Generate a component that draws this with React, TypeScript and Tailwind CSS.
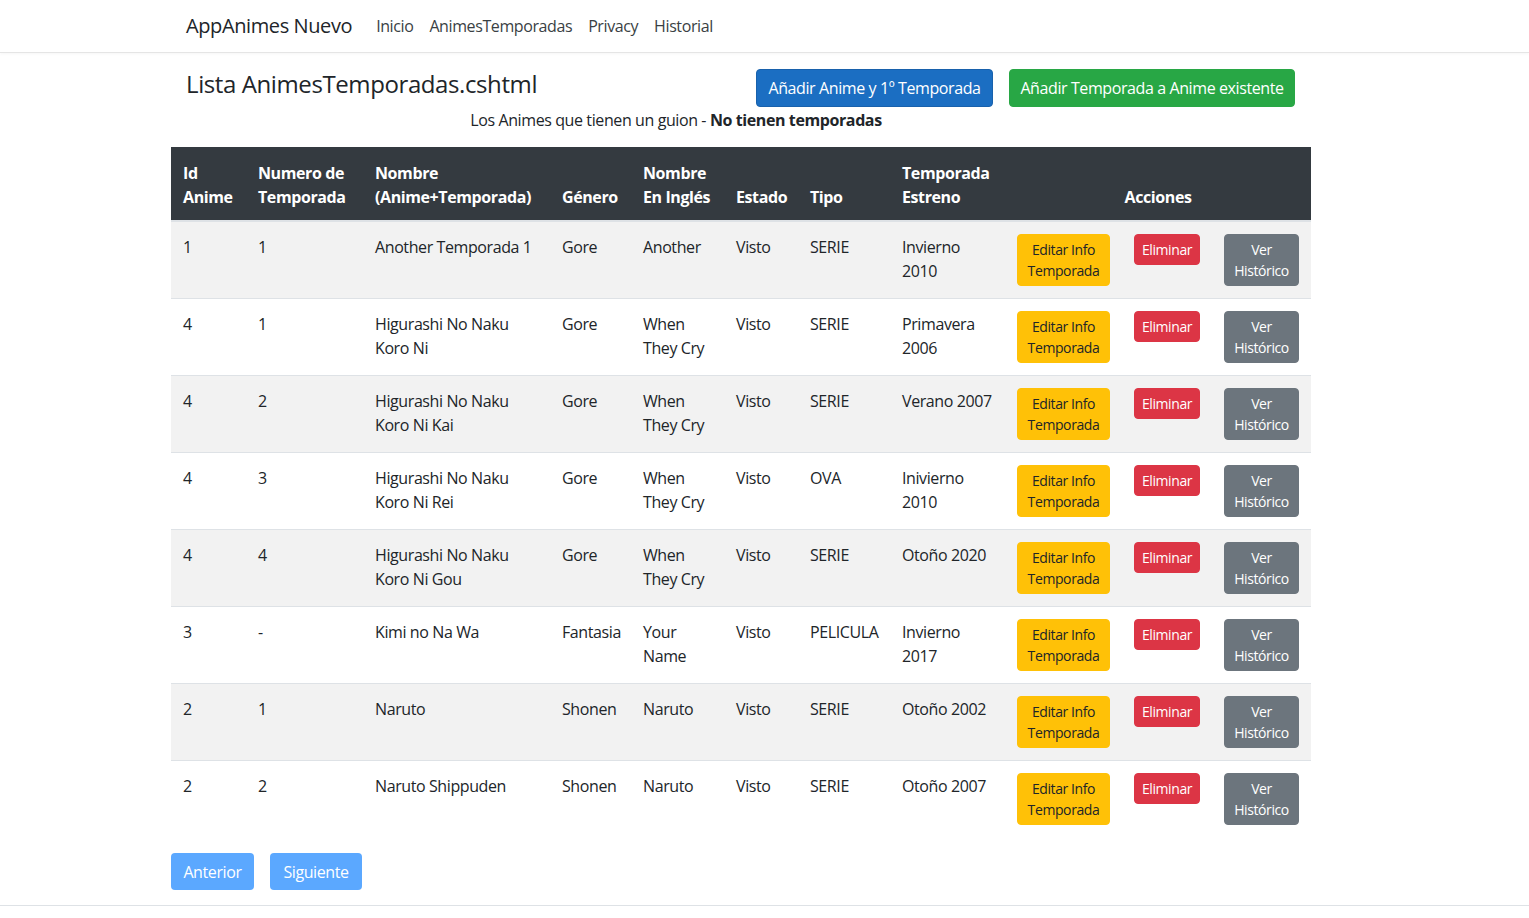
import React from 'react';

type Row = {
  id: string;
  season: string;
  name: string;
  genre: string;
  english: string;
  state: string;
  type: string;
  premiere: string;
};

// line breaks are written out so each cell wraps like the original page
const rows: Row[] = [
  { id: '1', season: '1', name: 'Another Temporada 1', genre: 'Gore', english: 'Another', state: 'Visto', type: 'SERIE', premiere: 'Invierno\n2010' },
  { id: '4', season: '1', name: 'Higurashi No Naku\nKoro Ni', genre: 'Gore', english: 'When\nThey Cry', state: 'Visto', type: 'SERIE', premiere: 'Primavera\n2006' },
  { id: '4', season: '2', name: 'Higurashi No Naku\nKoro Ni Kai', genre: 'Gore', english: 'When\nThey Cry', state: 'Visto', type: 'SERIE', premiere: 'Verano 2007' },
  { id: '4', season: '3', name: 'Higurashi No Naku\nKoro Ni Rei', genre: 'Gore', english: 'When\nThey Cry', state: 'Visto', type: 'OVA', premiere: 'Inivierno\n2010' },
  { id: '4', season: '4', name: 'Higurashi No Naku\nKoro Ni Gou', genre: 'Gore', english: 'When\nThey Cry', state: 'Visto', type: 'SERIE', premiere: 'Otoño 2020' },
  { id: '3', season: '-', name: 'Kimi no Na Wa', genre: 'Fantasia', english: 'Your\nName', state: 'Visto', type: 'PELICULA', premiere: 'Invierno\n2017' },
  { id: '2', season: '1', name: 'Naruto', genre: 'Shonen', english: 'Naruto', state: 'Visto', type: 'SERIE', premiere: 'Otoño 2002' },
  { id: '2', season: '2', name: 'Naruto Shippuden', genre: 'Shonen', english: 'Naruto', state: 'Visto', type: 'SERIE', premiere: 'Otoño 2007' },
];

const colWidths = ['75px', '117px', '187px', '81px', '93px', '74px', '92px', '115px', '117px', '90px', '99px'];

export default function App() {
  const td = 'pl-3 pr-2 pt-[13px] pb-3 align-top whitespace-pre-line';
  const th = 'pl-3 pr-2 pt-[14px] pb-[11px] align-bottom text-left font-bold';
  const tdBtn = 'pl-3 pt-3 pb-3 align-top';

  return (
    <div className="min-h-[918px] bg-white text-[16px] leading-6 tracking-[-0.4px] text-[#212529] font-['Segoe_UI','Open_Sans',sans-serif]">
      {/* Navbar */}
      <nav className="h-[53px] border-b border-[#e5e5e5] shadow-[0_1px_3px_rgba(0,0,0,0.04)]">
        <div className="ml-[186px] flex h-[52px] items-center">
          <span className="mr-4 text-[20px] text-[#212529]">AppAnimes Nuevo</span>
          <a className="px-2 text-[#3a3f44]">Inicio</a>
          <a className="px-2 text-[#3a3f44]">AnimesTemporadas</a>
          <a className="px-2 text-[#3a3f44]">Privacy</a>
          <a className="px-2 text-[#3a3f44]">Historial</a>
        </div>
      </nav>

      <main className="ml-[171px] w-[1140px]">
        <div className="flex items-start pt-4">
          <h4 className="ml-[15px] text-[24px] leading-[29px]">Lista AnimesTemporadas.cshtml</h4>
          <div className="ml-auto mr-4 flex gap-4">
            <button className="h-[38px] w-[237px] rounded border border-[#1861ac] bg-[#1b6ec2] text-white">
              Añadir Anime y 1º Temporada
            </button>
            <button className="h-[38px] w-[286px] rounded border border-[#28a745] bg-[#28a745] text-white">
              Añadir Temporada a Anime existente
            </button>
          </div>
        </div>
        <p className="mt-px w-[1010px] text-center">
          Los Animes que tienen un guion - <b>No tienen temporadas</b>
        </p>

        <table className="mt-[15px] w-[1140px] table-fixed border-collapse">
          <colgroup>
            {colWidths.map((w, i) => (
              <col key={i} style={{ width: w }} />
            ))}
          </colgroup>
          <thead className="bg-[#343a40] text-white">
            <tr className="border-b-2 border-[#dee2e6]">
              <th className={th}>Id<br />Anime</th>
              <th className={th}>Numero de<br />Temporada</th>
              <th className={th}>Nombre<br />(Anime+Temporada)</th>
              <th className={th}>Género</th>
              <th className={th}>Nombre<br />En Inglés</th>
              <th className={th}>Estado</th>
              <th className={th}>Tipo</th>
              <th className={th}>Temporada<br />Estreno</th>
              <th colSpan={3} className="pt-[14px] pb-[11px] align-bottom text-center font-bold">Acciones</th>
            </tr>
          </thead>
          <tbody>
            {rows.map((r, i) => (
              <tr key={i} className={`border-t border-[#dee2e6] ${i % 2 === 0 ? 'bg-[#f2f2f2]' : 'bg-white'}`}>
                <td className={td}>{r.id}</td>
                <td className={td}>{r.season}</td>
                <td className={td}>{r.name}</td>
                <td className={td}>{r.genre}</td>
                <td className={td}>{r.english}</td>
                <td className={td}>{r.state}</td>
                <td className={td}>{r.type}</td>
                <td className={td}>{r.premiere}</td>
                <td className={tdBtn}>
                  <button className="w-[93px] rounded border border-[#ffc107] bg-[#ffc107] py-1 text-[14px] leading-[21px] text-[#212529]">
                    Editar Info<br />Temporada
                  </button>
                </td>
                <td className={tdBtn}>
                  <button className="w-[66px] rounded border border-[#dc3545] bg-[#dc3545] py-1 text-[14px] leading-[21px] text-white">
                    Eliminar
                  </button>
                </td>
                <td className={tdBtn}>
                  <button className="w-[75px] rounded border border-[#6c757d] bg-[#6c757d] py-1 text-[14px] leading-[21px] text-white">
                    Ver<br />Histórico
                  </button>
                </td>
              </tr>
            ))}
          </tbody>
        </table>

        <div className="mt-4 flex gap-4">
          <button className="h-[37px] w-[83px] rounded bg-[#5ba8ff] text-white">Anterior</button>
          <button className="h-[37px] w-[92px] rounded bg-[#5ba8ff] text-white">Siguiente</button>
        </div>
      </main>

      <footer className="mt-[15px] border-t border-[#dee2e6]" />
    </div>
  );
}
